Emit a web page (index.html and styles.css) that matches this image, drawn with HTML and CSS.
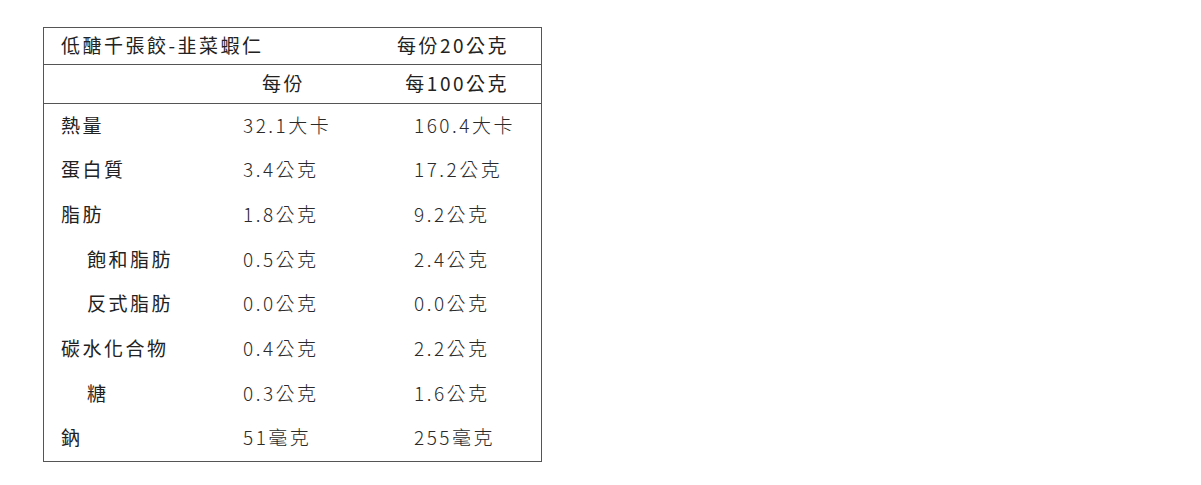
FILE: index.html
```html
<!DOCTYPE html>
<html lang="zh-Hant">
<head>
<meta charset="utf-8">
<title>低醣千張餃-韭菜蝦仁 營養標示</title>
<link rel="stylesheet" href="styles.css">
</head>
<body>
<div class="nutrition">
  <div class="title-row">
    <span class="title">低醣千張餃-韭菜蝦仁</span>
    <span class="serving">每份20公克</span>
  </div>
  <div class="head-row">
    <span></span>
    <span class="head-col2">每份</span>
    <span class="head-col3">每100公克</span>
  </div>
  <div class="body">
    <div class="row"><span class="label">熱量</span><span class="val">32.1大卡</span><span class="val">160.4大卡</span></div>
    <div class="row"><span class="label">蛋白質</span><span class="val">3.4公克</span><span class="val">17.2公克</span></div>
    <div class="row"><span class="label">脂肪</span><span class="val">1.8公克</span><span class="val">9.2公克</span></div>
    <div class="row"><span class="label sub">飽和脂肪</span><span class="val">0.5公克</span><span class="val">2.4公克</span></div>
    <div class="row"><span class="label sub">反式脂肪</span><span class="val">0.0公克</span><span class="val">0.0公克</span></div>
    <div class="row"><span class="label">碳水化合物</span><span class="val">0.4公克</span><span class="val">2.2公克</span></div>
    <div class="row"><span class="label sub">糖</span><span class="val">0.3公克</span><span class="val">1.6公克</span></div>
    <div class="row"><span class="label">鈉</span><span class="val">51毫克</span><span class="val">255毫克</span></div>
  </div>
</div>
</body>
</html>
```

FILE: styles.css
```css
html, body {
  margin: 0;
  padding: 0;
  background: #ffffff;
}

body {
  font-family: "Noto Sans CJK TC", "Noto Sans CJK SC", "Noto Sans", sans-serif;
  color: #222222;
  font-size: 19px;
  letter-spacing: 2.5px;
}

.nutrition {
  box-sizing: border-box;
  width: 499px;
  margin: 27px 0 0 43px;
  border: 1px solid #555555;
}

.title-row {
  box-sizing: border-box;
  height: 37px;
  display: flex;
  align-items: center;
  justify-content: space-between;
  padding: 0 32px 4px 17px;
  border-bottom: 1px solid #555555;
  font-weight: 400;
}

.head-row {
  box-sizing: border-box;
  height: 39px;
  display: grid;
  grid-template-columns: 182px 1fr auto;
  align-items: center;
  padding: 0 32px 4px 17px;
  border-bottom: 1px solid #555555;
  font-weight: 400;
}

.head-col2 {
  padding-left: 19px;
}

.body {
  display: flex;
  flex-direction: column;
}

.row {
  box-sizing: border-box;
  height: 44.625px;
  display: grid;
  grid-template-columns: 182px 171px 1fr;
  align-items: center;
  padding: 0 0 4px 17px;
}

.label {
  font-weight: 400;
}

.label.sub {
  padding-left: 26px;
}

.val {
  font-weight: 300;
  color: #2a2a2a;
}
```
